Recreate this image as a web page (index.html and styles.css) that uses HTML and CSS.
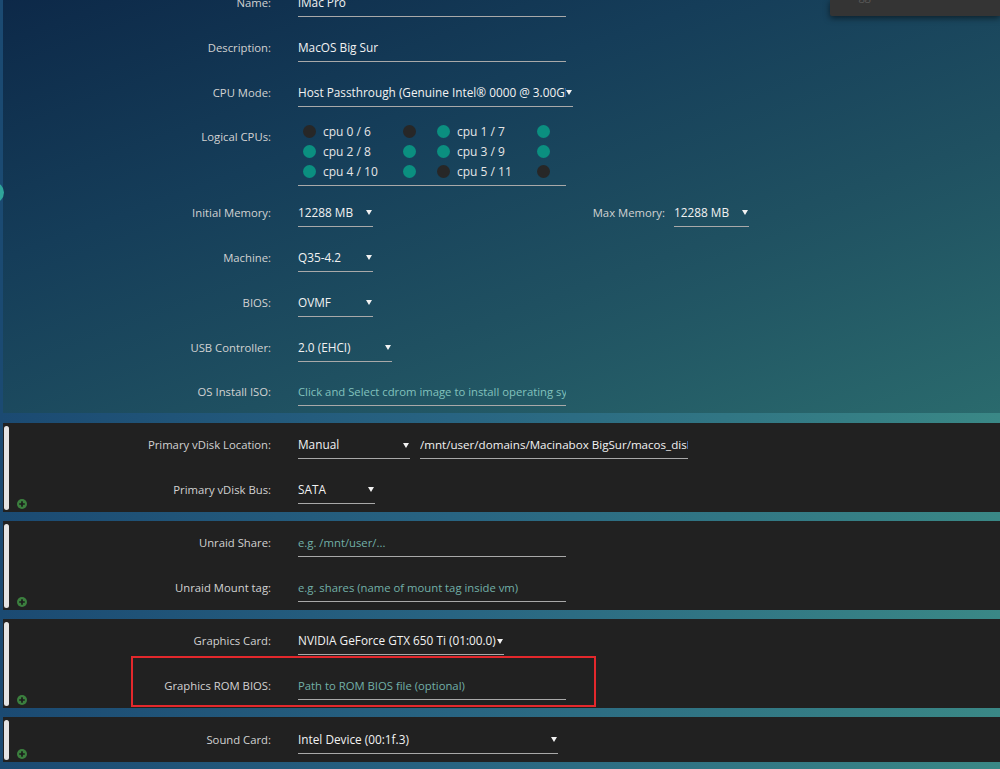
FILE: index.html
```html
<!DOCTYPE html>
<html>
<head>
<meta charset="utf-8">
<link rel="stylesheet" href="styles.css">
</head>
<body>
<div class="page">
  <div class="popup"><span>Toggle all to</span></div>
  <div class="edge-knob"></div>

  <section class="main-form">
    <div class="row">
      <div class="lbl">Name:</div>
      <div class="field w268">iMac Pro</div>
    </div>
    <div class="row">
      <div class="lbl">Description:</div>
      <div class="field w268">MacOS Big Sur</div>
    </div>
    <div class="row">
      <div class="lbl">CPU Mode:</div>
      <div class="select w275"><span class="val">Host Passthrough (Genuine Intel® 0000 @ 3.00GHz)</span><svg class="arrow" width="6" height="5" viewBox="0 0 6 5"><path d="M0 0H6L3 5Z" fill="#f2f2f2"/></svg></div>
    </div>
    <div class="row cpu-row">
      <div class="lbl top">Logical CPUs:</div>
      <div class="cpu-grid">
        <div class="cpu"><span class="dot off"></span><span class="cpu-name">cpu 0 / 6</span><span class="dot off"></span></div>
        <div class="cpu"><span class="dot on"></span><span class="cpu-name">cpu 1 / 7</span><span class="dot on"></span></div>
        <div class="cpu"><span class="dot on"></span><span class="cpu-name">cpu 2 / 8</span><span class="dot on"></span></div>
        <div class="cpu"><span class="dot on"></span><span class="cpu-name">cpu 3 / 9</span><span class="dot on"></span></div>
        <div class="cpu"><span class="dot on"></span><span class="cpu-name">cpu 4 / 10</span><span class="dot on"></span></div>
        <div class="cpu"><span class="dot off"></span><span class="cpu-name">cpu 5 / 11</span><span class="dot off"></span></div>
      </div>
    </div>
    <div class="row">
      <div class="lbl">Initial Memory:</div>
      <div class="cell-mem">
        <div class="select w75"><span class="val">12288 MB</span><svg class="arrow" width="6" height="5" viewBox="0 0 6 5"><path d="M0 0H6L3 5Z" fill="#f2f2f2"/></svg></div>
      </div>
      <div class="lbl2">Max Memory:</div>
      <div class="select w75"><span class="val">12288 MB</span><svg class="arrow" width="6" height="5" viewBox="0 0 6 5"><path d="M0 0H6L3 5Z" fill="#f2f2f2"/></svg></div>
    </div>
    <div class="row">
      <div class="lbl">Machine:</div>
      <div class="select w75"><span class="val">Q35-4.2</span><svg class="arrow" width="6" height="5" viewBox="0 0 6 5"><path d="M0 0H6L3 5Z" fill="#f2f2f2"/></svg></div>
    </div>
    <div class="row">
      <div class="lbl">BIOS:</div>
      <div class="select w75"><span class="val">OVMF</span><svg class="arrow" width="6" height="5" viewBox="0 0 6 5"><path d="M0 0H6L3 5Z" fill="#f2f2f2"/></svg></div>
    </div>
    <div class="row">
      <div class="lbl">USB Controller:</div>
      <div class="select w94"><span class="val">2.0 (EHCI)</span><svg class="arrow" width="6" height="5" viewBox="0 0 6 5"><path d="M0 0H6L3 5Z" fill="#f2f2f2"/></svg></div>
    </div>
    <div class="row last">
      <div class="lbl">OS Install ISO:</div>
      <div class="field w268 ph light">Click and Select cdrom image to install operating system</div>
    </div>
  </section>

  <section class="panel">
    <div class="side"><div class="bar"></div><div class="plus-col"><svg width="10" height="10" viewBox="0 0 10 10"><circle cx="5" cy="5" r="5" fill="#3b7f3e"/><path d="M5 2.2V7.8M2.2 5H7.8" stroke="#1c1c1c" stroke-width="1.7"/></svg></div></div>
    <div class="rows">
      <div class="row">
        <div class="lbl">Primary vDisk Location:</div>
        <div class="select w112"><span class="val">Manual</span><svg class="arrow" width="6" height="5" viewBox="0 0 6 5"><path d="M0 0H6L3 5Z" fill="#f2f2f2"/></svg></div>
        <div class="field w268 ml10 narrow">/mnt/user/domains/Macinabox BigSur/macos_disk.img</div>
      </div>
      <div class="row">
        <div class="lbl">Primary vDisk Bus:</div>
        <div class="select w77"><span class="val">SATA</span><svg class="arrow" width="6" height="5" viewBox="0 0 6 5"><path d="M0 0H6L3 5Z" fill="#f2f2f2"/></svg></div>
      </div>
    </div>
  </section>

  <section class="panel">
    <div class="side"><div class="bar"></div><div class="plus-col"><svg width="10" height="10" viewBox="0 0 10 10"><circle cx="5" cy="5" r="5" fill="#3b7f3e"/><path d="M5 2.2V7.8M2.2 5H7.8" stroke="#1c1c1c" stroke-width="1.7"/></svg></div></div>
    <div class="rows">
      <div class="row">
        <div class="lbl">Unraid Share:</div>
        <div class="field w268 ph">e.g. /mnt/user/...</div>
      </div>
      <div class="row">
        <div class="lbl">Unraid Mount tag:</div>
        <div class="field w268 ph">e.g. shares (name of mount tag inside vm)</div>
      </div>
    </div>
  </section>

  <section class="panel highlight-host">
    <div class="side"><div class="bar"></div><div class="plus-col"><svg width="10" height="10" viewBox="0 0 10 10"><circle cx="5" cy="5" r="5" fill="#3b7f3e"/><path d="M5 2.2V7.8M2.2 5H7.8" stroke="#1c1c1c" stroke-width="1.7"/></svg></div></div>
    <div class="rows">
      <div class="row">
        <div class="lbl">Graphics Card:</div>
        <div class="select w206"><span class="val">NVIDIA GeForce GTX 650 Ti (01:00.0)</span><svg class="arrow" width="6" height="5" viewBox="0 0 6 5"><path d="M0 0H6L3 5Z" fill="#f2f2f2"/></svg></div>
      </div>
      <div class="row">
        <div class="lbl">Graphics ROM BIOS:</div>
        <div class="field w268 ph">Path to ROM BIOS file (optional)</div>
      </div>
    </div>
    <div class="red-box"></div>
  </section>

  <section class="panel single">
    <div class="side"><div class="bar"></div><div class="plus-col"><svg width="10" height="10" viewBox="0 0 10 10"><circle cx="5" cy="5" r="5" fill="#3b7f3e"/><path d="M5 2.2V7.8M2.2 5H7.8" stroke="#1c1c1c" stroke-width="1.7"/></svg></div></div>
    <div class="rows">
      <div class="row">
        <div class="lbl">Sound Card:</div>
        <div class="select w260"><span class="val">Intel Device (00:1f.3)</span><svg class="arrow" width="6" height="5" viewBox="0 0 6 5"><path d="M0 0H6L3 5Z" fill="#f2f2f2"/></svg></div>
      </div>
    </div>
  </section>
</div>
</body>
</html>
```
FILE: styles.css
```css
* { box-sizing: border-box; }

html, body {
  margin: 0;
  padding: 0;
  height: 769px;
  overflow: hidden;
}

body {
  font-family: "Open Sans", "Liberation Sans", sans-serif;
  font-size: 11.5px;
  color: #d6d6d6;
  background: linear-gradient(90deg, #1b4a72 0%, #286482 45%, #3a8886 100%);
}

.page {
  position: relative;
  display: flow-root;
  margin-left: 3px;
  height: 769px;
}

.popup {
  position: absolute;
  top: 0;
  right: 0;
  width: 170px;
  height: 16px;
  background: #343434;
  border-bottom-left-radius: 2px;
  box-shadow: 0 2px 6px rgba(0, 0, 0, 0.55);
  overflow: hidden;
  z-index: 5;
}
.popup span {
  display: block;
  margin: -12px 0 0 16px;
  line-height: 16px;
  color: #5a5a5a;
  font-size: 11px;
}

.edge-knob {
  position: absolute;
  left: -20px;
  top: 182px;
  width: 21px;
  height: 21px;
  border-radius: 50%;
  background: #2fa59b;
}

.main-form {
  margin-top: -20px;
  height: 433px;
  padding-left: 30px;
  background: linear-gradient(160deg, #0c2747 0%, #153d59 35%, #1f5061 65%, #2a6a6d 100%);
}

.row {
  display: flex;
  align-items: center;
  height: 45px;
}

.row.last { height: 43px; }

.lbl {
  width: 238px;
  flex: none;
  text-align: right;
  margin-right: 27px;
  color: #d2d2d2;
  font-size: 11.3px;
  line-height: 16px;
}

.lbl.top { align-self: flex-start; margin-top: 14px; }

.field, .select {
  flex: none;
  height: 28px;
  line-height: 27px;
  font-size: 11.8px;
  border-bottom: 1px solid #a9a9a9;
  color: #f2f2f2;
  white-space: nowrap;
  overflow: hidden;
}
.field.narrow { font-size: 11.6px; }

.select {
  display: flex;
  align-items: center;
  justify-content: space-between;
}
.select .val {
  overflow: hidden;
  flex: 1;
  min-width: 0;
}
.select .arrow {
  flex: none;
  margin: 1px 1px 0 0;
}

.ph { color: #72b0a8; font-size: 11.3px; }
.ph.light { color: #82c2bd; }

.w268 { width: 268px; }
.w275 { width: 275px; }
.w75 { width: 75px; }
.w77 { width: 77px; }
.w94 { width: 94px; }
.w112 { width: 112px; }
.w206 { width: 206px; }
.w260 { width: 260px; }
.ml10 { margin-left: 10px; }

.cell-mem {
  width: 282px;
  flex: none;
}

.lbl2 {
  width: 85px;
  flex: none;
  text-align: right;
  margin-right: 9px;
  color: #d2d2d2;
  font-size: 11.3px;
}

.cpu-row {
  height: 75px;
  align-items: flex-start;
}

.cpu-grid {
  margin-top: 6px;
  width: 268px;
  padding: 0 0 4px 5px;
  border-bottom: 1px solid #a9a9a9;
  display: grid;
  grid-template-columns: 134px 134px;
  grid-auto-rows: 20px;
}

.cpu {
  display: flex;
  align-items: center;
}

.dot {
  width: 13px;
  height: 13px;
  border-radius: 50%;
  flex: none;
}
.dot.on { background: #0b8f80; }
.dot.off { background: #272727; }

.cpu-name {
  width: 80px;
  margin-left: 7px;
  color: #e6e6e6;
  font-size: 12px;
}

.panel {
  position: relative;
  display: flex;
  height: 89px;
  margin-top: 10px;
  background: #212121;
}
.main-form + .panel { margin-top: 10px; }
.panel + .panel { margin-top: 9px; }
.panel.single { height: 45px; }

.side {
  width: 30px;
  flex: none;
  display: flex;
}

.bar {
  width: 5px;
  margin: 3px 0 2px 1px;
  border-radius: 3px;
  background: #e4e4e4;
}

.plus-col {
  display: flex;
  align-items: flex-end;
  padding-bottom: 3px;
  margin-left: 8px;
}
.plus-col svg { display: block; }

.rows {
  flex: 1;
}
.panel .row { height: 44.5px; }
.panel.single .row { height: 45px; }

.red-box {
  position: absolute;
  left: 128px;
  top: 37px;
  width: 465px;
  height: 51px;
  border: 2px solid #e3282c;
  pointer-events: none;
}
```
